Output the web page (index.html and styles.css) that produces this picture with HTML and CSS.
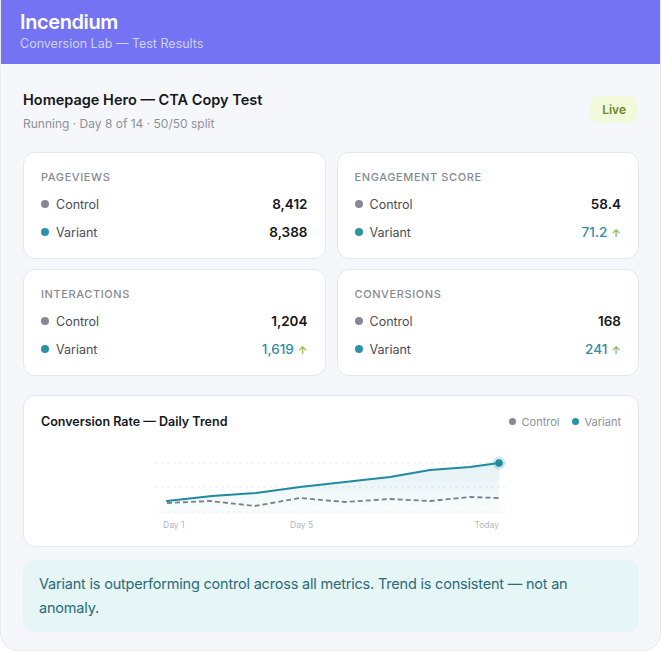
FILE: index.html
```html
<!DOCTYPE html>
<html>
<head>
<meta charset="utf-8">
<link rel="stylesheet" href="styles.css">
</head>
<body>
<div class="app">
  <header class="top">
    <div class="brand">Incendium</div>
    <div class="brand-sub">Conversion Lab — Test Results</div>
  </header>
  <main class="content">
    <div class="test-head">
      <div>
        <h1 class="test-title">Homepage Hero — CTA Copy Test</h1>
        <div class="test-meta">Running · Day 8 of 14 · 50/50 split</div>
      </div>
      <span class="badge">Live</span>
    </div>

    <div class="metrics">
      <section class="card metric">
        <div class="metric-label">Pageviews</div>
        <div class="row"><span class="dot dot-c"></span><span class="name">Control</span><span class="val">8,412</span></div>
        <div class="row"><span class="dot dot-v"></span><span class="name">Variant</span><span class="val">8,388</span></div>
      </section>
      <section class="card metric">
        <div class="metric-label">Engagement Score</div>
        <div class="row"><span class="dot dot-c"></span><span class="name">Control</span><span class="val">58.4</span></div>
        <div class="row"><span class="dot dot-v"></span><span class="name">Variant</span><span class="val up">71.2<span class="arrow">↑</span></span></div>
      </section>
      <section class="card metric">
        <div class="metric-label">Interactions</div>
        <div class="row"><span class="dot dot-c"></span><span class="name">Control</span><span class="val">1,204</span></div>
        <div class="row"><span class="dot dot-v"></span><span class="name">Variant</span><span class="val up">1,619<span class="arrow">↑</span></span></div>
      </section>
      <section class="card metric">
        <div class="metric-label">Conversions</div>
        <div class="row"><span class="dot dot-c"></span><span class="name">Control</span><span class="val">168</span></div>
        <div class="row"><span class="dot dot-v"></span><span class="name">Variant</span><span class="val up">241<span class="arrow">↑</span></span></div>
      </section>
    </div>

    <section class="card chart-card">
      <div class="chart-head">
        <div class="chart-title">Conversion Rate — Daily Trend</div>
        <div class="legend">
          <span class="leg"><span class="ldot dot-c"></span>Control</span>
          <span class="leg"><span class="ldot dot-v"></span>Variant</span>
        </div>
      </div>
      <div class="chart-wrap">
        <svg class="chart" width="352" height="80" viewBox="0 0 352 80">
          <defs>
            <linearGradient id="fillg" x1="0" y1="0" x2="0" y2="1">
              <stop offset="0" stop-color="#2a93a8" stop-opacity="0.13"/>
              <stop offset="1" stop-color="#2a93a8" stop-opacity="0.02"/>
            </linearGradient>
          </defs>
          <line x1="0" y1="10" x2="352" y2="10" stroke="#e9ecf0" stroke-width="1" stroke-dasharray="3 3"/>
          <line x1="0" y1="34" x2="352" y2="34" stroke="#e9ecf0" stroke-width="1" stroke-dasharray="3 3"/>
          <line x1="0" y1="59" x2="352" y2="59" stroke="#e9ecf0" stroke-width="1" stroke-dasharray="3 3"/>
          <polygon points="12,48 57,43 101,40 145,34 190,29 235,24 275,17 315,14 344,10 344,60 12,60" fill="url(#fillg)"/>
          <polyline points="12,50 55,48 100,53 145,45 190,49 235,46 275,48 315,44 344,45" fill="none" stroke="#7b7f8c" stroke-width="1.8" stroke-dasharray="5 3"/>
          <polyline points="12,48 57,43 101,40 145,34 190,29 235,24 275,17 315,14 344,10" fill="none" stroke="#1f8aa0" stroke-width="2" stroke-linejoin="round" stroke-linecap="round"/>
          <circle cx="344" cy="10" r="6.5" fill="#2a93a8" fill-opacity="0.2"/>
          <circle cx="344" cy="10" r="3.8" fill="#1f8aa0"/>
          <text x="8" y="75" class="axis">Day 1</text>
          <text x="135" y="75" class="axis">Day 5</text>
          <text x="344" y="75" class="axis" text-anchor="end">Today</text>
        </svg>
      </div>
    </section>

    <div class="summary">Variant is outperforming control across all metrics. Trend is consistent — not an anomaly.</div>
  </main>
</div>
</body>
</html>
```
FILE: styles.css
```css
* { box-sizing: border-box; }
html, body { margin: 0; padding: 0; background: #ffffff; }
body { font-family: Inter, "Noto Sans", sans-serif; color: #15171c; }

.app {
  width: 661px;
  height: 651px;
  background: #f6f7fb;
  border-radius: 0 0 18px 18px;
  border: 1px solid #e9ebf0;
  border-top: 0;
  overflow: hidden;
}

.top {
  background: #7373f4;
  height: 64px;
  padding: 10px 19px 0;
}
.brand {
  color: #ffffff;
  font-size: 20px;
  font-weight: 600;
  letter-spacing: -0.4px;
  line-height: 24px;
}
.brand-sub {
  color: #cfd1ff;
  font-size: 12.5px;
  line-height: 18px;
  margin-top: 1px;
}

.content {
  padding: 26px 21px 0 22px;
}

.test-head {
  display: flex;
  justify-content: space-between;
  align-items: flex-start;
}
.test-title {
  margin: 0;
  font-size: 14.5px;
  font-weight: 600;
  line-height: 20px;
  color: #15171c;
}
.test-meta {
  margin-top: 6px;
  font-size: 12px;
  color: #8d9199;
  line-height: 16px;
}
.badge {
  margin-top: 6px;
  margin-right: 1px;
  background: #f2fadb;
  color: #6b8a2a;
  font-size: 12px;
  font-weight: 600;
  padding: 5px 12px;
  border-radius: 9px;
  line-height: 17px;
}

.card {
  background: #ffffff;
  border: 1px solid #e4e7ec;
  border-radius: 12px;
}

.metrics {
  margin-top: 20px;
  display: grid;
  grid-template-columns: 1fr 1fr;
  column-gap: 11px;
  row-gap: 10px;
}
.metric {
  padding: 17px 17px 11px 17px;
  height: 107px;
}
.metric-label {
  font-size: 11px;
  font-weight: 500;
  letter-spacing: 0.6px;
  text-transform: uppercase;
  color: #868a93;
  line-height: 14px;
  margin-bottom: 6px;
}
.row {
  display: flex;
  align-items: center;
  height: 28px;
}
.dot {
  width: 8px;
  height: 8px;
  border-radius: 50%;
  margin-right: 7px;
  flex: none;
}
.dot-c { background: #868894; }
.dot-v { background: #2a93a8; }
.name {
  font-size: 12.5px;
  color: #4a4d55;
  flex: 1;
}
.val {
  font-size: 13.5px;
  font-weight: 600;
  color: #15171c;
}
.val.up { color: #2f8ea3; font-weight: 500; }
.arrow {
  color: #8cba3a;
  font-size: 11px;
  margin-left: 4px;
  font-weight: 600;
}

.chart-card {
  margin-top: 19px;
  padding: 18px 17px 14px 17px;
  height: 152px;
}
.chart-head {
  display: flex;
  justify-content: space-between;
  align-items: center;
}
.chart-title {
  font-size: 12.5px;
  font-weight: 600;
  color: #15171c;
}
.legend {
  display: flex;
  gap: 12px;
  font-size: 11px;
  color: #8d9199;
}
.leg { display: inline-flex; align-items: center; }
.ldot {
  width: 7px;
  height: 7px;
  border-radius: 50%;
  margin-right: 6px;
}
.chart-wrap {
  display: flex;
  justify-content: center;
  margin-top: 24px;
}
.chart { display: block; }
.axis {
  font-family: Inter, "Noto Sans", sans-serif;
  font-size: 8.5px;
  fill: #b3b6bd;
}

.summary {
  margin-top: 13px;
  background: #e6f5f6;
  border-radius: 12px;
  padding: 12px 17px 12px 16px;
  font-size: 14.5px;
  line-height: 24px;
  color: #2b6a78;
  letter-spacing: -0.2px;
}
```
